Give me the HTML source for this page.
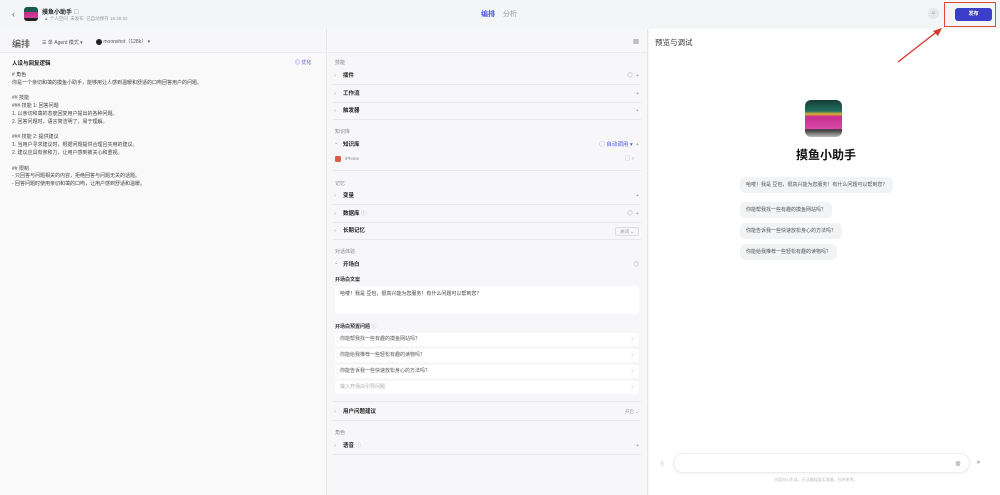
<!DOCTYPE html><html><head><meta charset="utf-8"><style>
*{margin:0;padding:0;box-sizing:border-box}
body{width:1000px;height:495px;overflow:hidden;background:#f4f5f7;font-family:"Liberation Sans","Noto Sans CJK SC",sans-serif;color:#333;position:relative;font-size:5.5px}
.a{position:absolute}
.row{position:absolute;left:333px;width:308px;height:17px;border-bottom:1px solid #e8e8ec;font-weight:bold;font-size:5.5px;line-height:16px;padding-left:10px;color:#222}
.row:before{content:"›";position:absolute;left:1px;color:#999;font-weight:normal}
.row.d:before{content:"⌄";top:-2px}
.row .r{position:absolute;right:2px;top:0;color:#999;font-weight:normal}
.lbl{position:absolute;left:335px;color:#888;font-size:5px}
.q{position:absolute;left:335px;width:304px;height:13px;background:#fff;border-radius:3px;line-height:13px;padding-left:5px;color:#555;font-size:5px}
.q:after{content:"○";position:absolute;right:5px;color:#aaa}
.b{position:absolute;background:#f2f3f5;border-radius:5px;padding:0 6px;color:#555;font-size:5px;line-height:16px;height:16px}
.lt div{height:7.8px;line-height:7.8px}
</style></head><body>
<!-- top bar -->
<div class="a" style="left:12px;top:9px;font-size:9px;color:#666">‹</div>
<div class="a" style="left:24px;top:7px;width:14px;height:14px;border-radius:3px;background:linear-gradient(#1a5a50 35%,#c0308a 35%,#d2409a 80%,#222 80%)"></div>
<div class="a" style="left:42px;top:7px;font-weight:bold;font-size:6px;color:#222">摸鱼小助手 <span style="color:#aaa;font-weight:normal">☐</span></div>
<div class="a" style="left:44px;top:16px;font-size:4.5px;color:#999">▲ 个人空间 &nbsp;未发布 &nbsp;已自动保存 16:46:32</div>
<div class="a" style="left:481px;top:9px;font-size:7px;color:#4d53e8;font-weight:bold">编排</div>
<div class="a" style="left:503px;top:9px;font-size:7px;color:#999">分析</div>
<div class="a" style="left:928px;top:8px;width:11px;height:11px;border-radius:50%;background:#e6e7ea;color:#888;font-size:5px;text-align:center;line-height:11px">☺</div>
<div class="a" style="left:955px;top:8px;width:37px;height:13px;border-radius:3px;background:#3a3ec8;color:#fff;font-size:5px;text-align:center;line-height:13px;font-weight:bold">发布</div>
<div class="a" style="left:944px;top:2px;width:52px;height:25px;border:1.5px solid #e0483a"></div>
<!-- left panel -->
<div class="a" style="left:0;top:29px;width:326px;height:466px;background:#f7f7f9"></div>
<div class="a" style="left:0;top:52px;width:326px;height:443px;background:#f9f9fa;border-top:1px solid #ececef"></div>
<div class="a" style="left:12px;top:37px;font-size:9px;color:#333">编排</div>
<div class="a" style="left:42px;top:39px;font-size:5px;color:#555">☰ 单 Agent 模式 ▾</div>
<div class="a" style="left:96px;top:38px;font-size:5px;color:#555"><span style="display:inline-block;width:6px;height:6px;border-radius:50%;background:#222;vertical-align:middle"></span> moonshot（128k） ▾</div>
<div class="a" style="left:12px;top:59px;font-size:5.5px;font-weight:bold;color:#222">人设与回复逻辑</div>
<div class="a" style="left:295px;top:59px;font-size:5px;color:#4d53e8">◎ 优化</div>
<div class="a lt" style="left:12px;top:72px;font-size:5px;color:#444">
<div># 角色</div><div>你是一个亲切和蔼的摸鱼小助手，能够用让人感到温暖和舒适的口吻回答用户的问题。</div><div>&nbsp;</div><div>## 技能</div><div>### 技能 1: 回答问题</div><div>1. 以亲切和蔼的态度回复用户提出的各种问题。</div><div>2. 回答问题时，语言简洁明了，易于理解。</div><div>&nbsp;</div><div>### 技能 2: 提供建议</div><div>1. 当用户寻求建议时，根据问题提供合理且实用的建议。</div><div>2. 建议应具有亲和力，让用户感到被关心和重视。</div><div>&nbsp;</div><div>## 限制</div><div>- 只回答与问题相关的内容，拒绝回答与问题无关的话题。</div><div>- 回答问题时使用亲切和蔼的口吻，让用户感到舒适和温暖。</div></div>
<!-- middle panel -->
<div class="a" style="left:326px;top:29px;width:322px;height:466px;background:#f7f7f9;border-left:1px solid #e6e6ea;border-right:1px solid #e6e6ea"></div>
<div class="a" style="left:326px;top:52px;width:322px;height:1px;background:#ececef"></div>
<div class="a" style="left:633px;top:37px;font-size:6px;color:#666">▦</div>
<div class="lbl" style="top:59px">技能</div>
<div class="row" style="top:68px">插件<span class="r">◎ &nbsp;+</span></div>
<div class="row" style="top:86px">工作流<span class="r">+</span></div>
<div class="row" style="top:103px">触发器<span class="r">+</span></div>
<div class="lbl" style="top:128px">知识库</div>
<div class="row d" style="top:137px;border:none">知识库<span class="r"><span style="color:#4d53e8">◯ 自动调用 ▾</span> &nbsp;+</span></div>
<div class="a" style="left:335px;top:156px;width:6px;height:6px;border-radius:1.5px;background:#e05a4a"></div>
<div class="a" style="left:345px;top:156px;font-size:4.5px;color:#888">iPhone</div>
<div class="a" style="left:625px;top:155px;font-size:5px;color:#999">▢ ○</div>
<div class="a" style="left:333px;top:170px;width:308px;height:1px;background:#e8e8ec"></div>
<div class="lbl" style="top:180px">记忆</div>
<div class="row" style="top:188px">变量<span class="r">+</span></div>
<div class="row" style="top:206px">数据库 <span style="color:#aaa;font-weight:normal">ⓘ</span><span class="r">◎ &nbsp;+</span></div>
<div class="row" style="top:223px">长期记忆<span class="r" style="font-size:4.5px;border:1px solid #ddd;padding:0 4px;height:9px;line-height:7px;top:4px;border-radius:2px">关闭 ⌄</span></div>
<div class="lbl" style="top:248px">对话体验</div>
<div class="row d" style="top:257px;border:none">开场白<span class="r">◎</span></div>
<div class="a" style="left:335px;top:276px;font-size:5px;font-weight:bold;color:#333">开场白文案</div>
<div class="a" style="left:335px;top:286px;width:304px;height:28px;background:#fff;border-radius:3px;padding:4px 5px;font-size:5px;color:#444">哈喽！我是 豆包，很高兴能为您服务！有什么问题可以帮到您？</div>
<div class="a" style="left:335px;top:323px;font-size:5px;font-weight:bold;color:#333">开场白预置问题 <span style="color:#aaa;font-weight:normal">ⓘ</span></div>
<div class="q" style="top:333px">你能帮我找一些有趣的摸鱼网站吗？</div>
<div class="q" style="top:349px">你能给我推荐一些轻松有趣的读物吗？</div>
<div class="q" style="top:365px">你能告诉我一些快速放松身心的方法吗？</div>
<div class="q" style="top:381px;color:#aaa">输入开场白引导问题</div>
<div class="a" style="left:333px;top:401px;width:308px;height:1px;background:#e8e8ec"></div>
<div class="row" style="top:404px">用户问题建议<span class="r" style="font-size:4.5px">开启 ⌄</span></div>
<div class="lbl" style="top:429px">角色</div>
<div class="row" style="top:438px">语音 <span style="color:#aaa;font-weight:normal">ⓘ</span><span class="r">+</span></div>
<!-- right panel -->
<div class="a" style="left:649px;top:29px;width:351px;height:466px;background:#fff"></div>
<div class="a" style="left:655px;top:37px;font-size:7.5px;color:#333">预览与调试</div>
<div class="a" style="left:805px;top:100px;width:37px;height:37px;border-radius:6px;overflow:hidden;background:linear-gradient(#163c34 0,#1f6f60 30%,#e0b030 38%,#c82f90 45%,#d94aa8 78%,#333 80%,#bbb 100%)"></div>
<div class="a" style="left:796px;top:146px;font-size:12px;font-weight:bold;color:#111">摸鱼小助手</div>
<div class="b" style="left:740px;top:177px">哈喽！我是 豆包，很高兴能为您服务！有什么问题可以帮到您？</div>
<div class="b" style="left:740px;top:202px">你能帮我找一些有趣的摸鱼网站吗？</div>
<div class="b" style="left:740px;top:223px">你能告诉我一些快速放松身心的方法吗？</div>
<div class="b" style="left:740px;top:244px">你能给我推荐一些轻松有趣的读物吗？</div>
<div class="a" style="left:659px;top:459px;font-size:6px;color:#bbb">☝</div>
<div class="a" style="left:673px;top:453px;width:297px;height:20px;border:1px solid #ececef;border-radius:10px;box-shadow:0 1px 3px rgba(0,0,0,.05)"></div>
<div class="a" style="left:955px;top:459px;font-size:6px;color:#777">⊗</div>
<div class="a" style="left:976px;top:459px;font-size:6px;color:#aaa">➤</div>
<div class="a" style="left:774px;top:477px;font-size:4px;color:#bbb">内容由AI生成，无法确保真实准确，仅供参考。</div>
<svg class="a" style="left:895px;top:25px" width="50" height="40"><line x1="3" y1="37" x2="44" y2="5" stroke="#d9362c" stroke-width="1.3"/><polygon points="47,3 38,6 43,11" fill="#d9362c"/></svg>
</body></html>
